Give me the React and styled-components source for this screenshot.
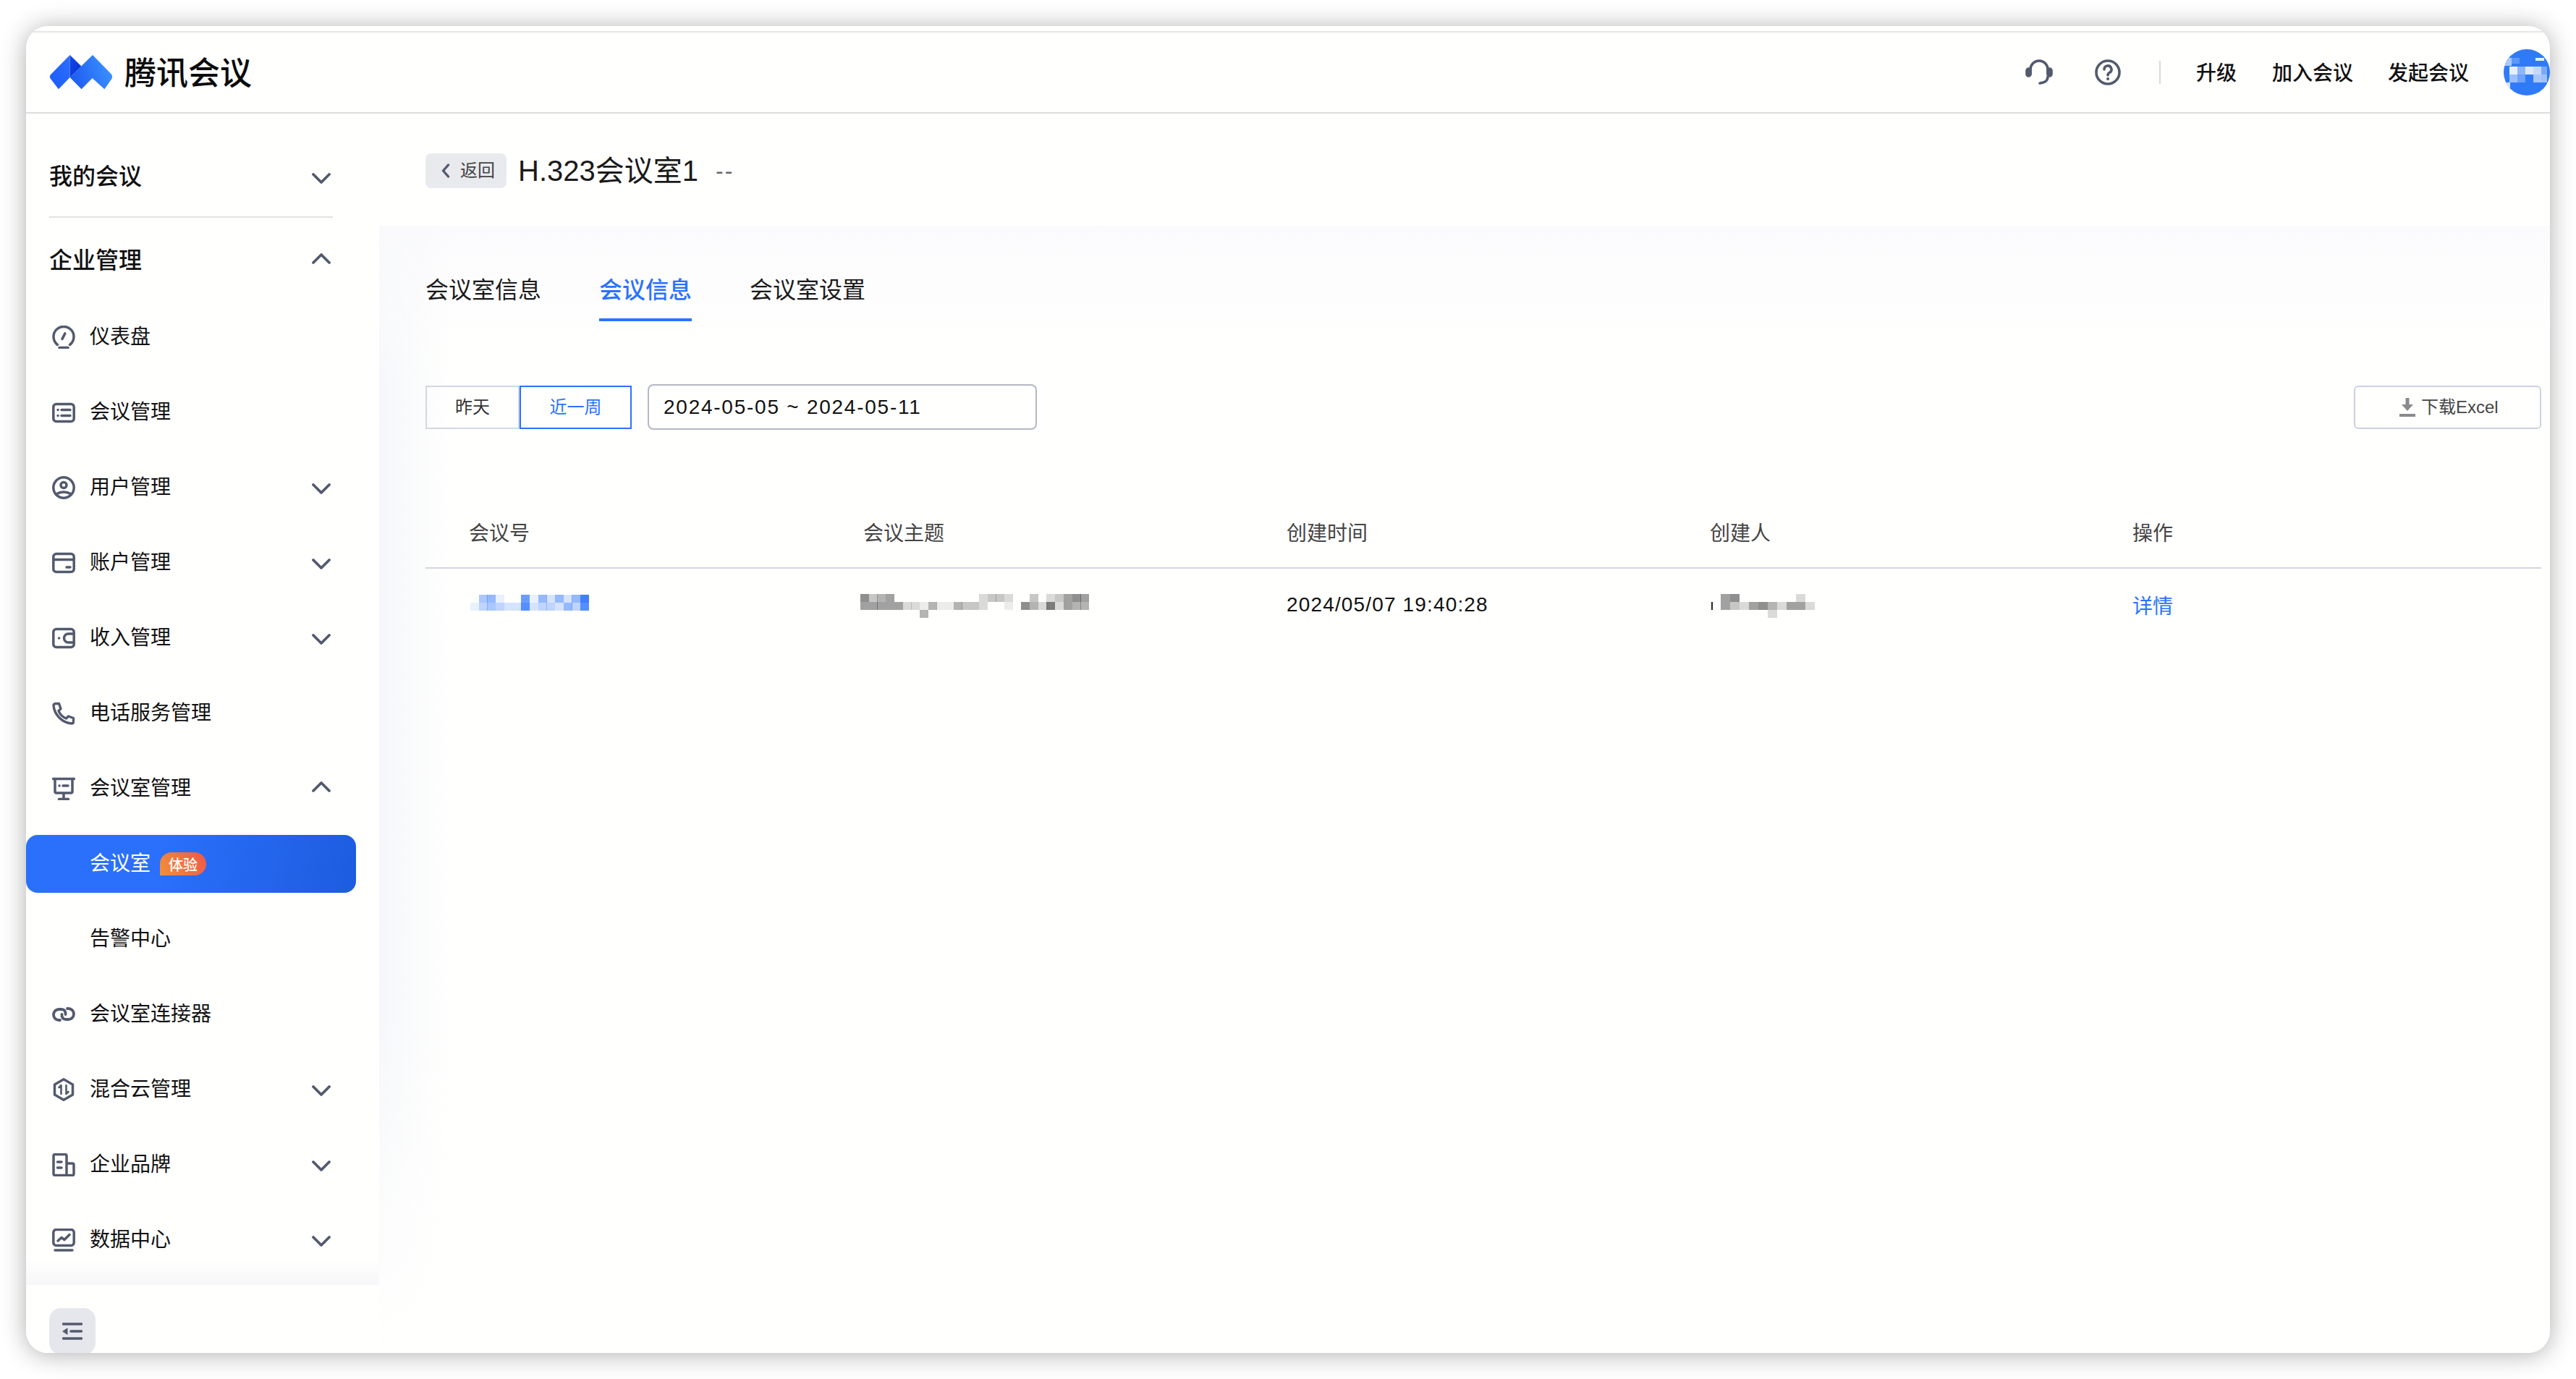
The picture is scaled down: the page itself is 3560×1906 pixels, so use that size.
import React from 'react';
import styled, { createGlobalStyle } from 'styled-components';

const FONT = '"Liberation Sans", "Noto Sans CJK SC", sans-serif';
const ICON = '#535a6d';
const BLUE = '#2b72ff';

const Global = createGlobalStyle`
  html, body { margin: 0; padding: 0; background: #fff; }
  body { font-family: ${FONT}; color: #111; }
  * { box-sizing: border-box; }
`;

const Page = styled.div`
  width: 3560px;
  height: 1906px;
  padding: 36px;
  overflow: hidden;
  background: #fff;
`;
const Win = styled.div`
  width: 3488px;
  height: 1834px;
  border-radius: 30px;
  overflow: hidden;
  background: #fffffe;
  box-shadow: 0 2px 34px rgba(0,0,0,.32);
  display: flex;
  flex-direction: column;
`;
const TopBar = styled.header`
  height: 114px;
  padding: 0 0 0 32px;
  margin-top: 7px;
  border-top: 2px solid #e5e5e5;
  border-bottom: 2px solid #dedede;
  flex: none;
  display: flex;
  align-items: center;
`;
const LogoText = styled.span`
  font-size: 44px;
  font-weight: 500;
  margin: 4px 0 0 16px;
  line-height: 60px;
  color: #0c0c0c;
`;
const TopRight = styled.div`
  margin-left: auto;
  display: flex;
  align-items: center;
`;
const TopIconBtn = styled.span`
  display: flex;
  margin-right: ${p => p.$gap}px;
`;
const VLine = styled.span`
  width: 2px;
  height: 32px;
  background: #d9d9d9;
  margin-right: 49px;
`;
const TopLink = styled.a`
  font-size: 28px;
  font-weight: 500;
  line-height: 40px;
  margin-top: 3px;
  color: #111;
  margin-right: ${p => p.$gap}px;
`;
const Avatar = styled.div`
  width: 64px;
  height: 64px;
  border-radius: 50%;
  overflow: hidden;
  display: flex;
`;
const Body = styled.div`
  flex: 1;
  min-height: 0;
  display: flex;
`;
const Side = styled.aside`
  width: 488px;
  flex: none;
  display: flex;
  flex-direction: column;
  background: #fffffe;
`;
const Nav = styled.nav`
  flex: 1;
  min-height: 0;
  padding-top: 44px;
  position: relative;
  overflow: hidden;
  &::after {
    content: '';
    position: absolute;
    left: 0;
    right: 0;
    bottom: 0;
    height: 36px;
    background: linear-gradient(to bottom, rgba(247,247,249,0), #f7f7f9);
  }
`;
const GroupRow = styled.div`
  width: 456px;
  height: 80px;
  padding: 0 35px 0 32px;
  display: flex;
  align-items: center;
  justify-content: space-between;
  font-size: 32px;
  font-weight: 500;
  color: #111;
`;
const SideDivider = styled.div`
  width: 392px;
  height: 2px;
  margin: 18px 0 16px 32px;
  background: #e2e2e2;
`;
const MenuList = styled.ul`
  list-style: none;
  margin: 29px 0 0;
  padding: 0;
  display: flex;
  flex-direction: column;
  gap: 24px;
`;
const Item = styled.li`
  width: 456px;
  height: 80px;
  padding: 0 35px 0 36px;
  display: flex;
  align-items: center;
  border-radius: 16px;
  font-size: 28px;
  color: ${p => (p.$active ? '#fff' : '#111')};
  background: ${p => (p.$active ? 'linear-gradient(100deg, #2a70fb 40%, #1d5cdf 100%)' : 'transparent')};
`;
const IconSlot = styled.span`
  width: 32px;
  height: 32px;
  margin-right: 20px;
  display: flex;
  flex: none;
`;
const Label = styled.span`
  line-height: 40px;
`;
const Chevron = styled.svg`
  margin-left: auto;
  margin-top: ${p => p.$nudge || 0}px;
  flex: none;
`;
const Badge = styled.span`
  width: 64px;
  height: 32px;
  margin-left: 13px;
  border-radius: 16px 16px 16px 0;
  background: linear-gradient(60deg, #f0913a, #ee5748);
  color: #fff;
  font-size: 20px;
  font-weight: 500;
  display: flex;
  align-items: center;
  justify-content: center;
`;
const SideFoot = styled.div`
  height: 94px;
  flex: none;
  padding: 32px 0 0 32px;
`;
const CollapseBtn = styled.button`
  width: 64px;
  height: 64px;
  border: 0;
  padding: 0;
  border-radius: 16px;
  background: #e5e7ed;
  display: flex;
  align-items: center;
  justify-content: center;
`;
const Main = styled.main`
  flex: 1;
  min-width: 0;
  display: flex;
  flex-direction: column;
`;
const TitleRow = styled.div`
  height: 155px;
  flex: none;
  padding: 55px 0 0 64px;
  display: flex;
  align-items: flex-start;
`;
const BackBtn = styled.button`
  width: 112px;
  height: 48px;
  border: 0;
  border-radius: 8px;
  background: #e9eaee;
  padding: 0 0 0 22px;
  display: flex;
  align-items: center;
  gap: 14px;
  font: 24px/32px ${FONT};
  color: #444;
`;
const Title = styled.h1`
  margin: 0 0 0 16px;
  font-size: 40px;
  font-weight: 400;
  line-height: 48px;
  color: #1a1a1a;
`;
const Dash = styled.span`
  margin-left: 24px;
  font-size: 32px;
  line-height: 48px;
  color: #666;
  letter-spacing: 2px;
`;
const Panel = styled.section`
  flex: 1;
  min-height: 0;
  padding: 65px 12px 0 64px;
  position: relative;
  isolation: isolate;
  background: linear-gradient(to bottom, rgba(251,251,253,1), rgba(251,251,253,0) 170px);
  &::before {
    content: '';
    position: absolute;
    inset: 0 auto 0 0;
    width: 100px;
    z-index: -1;
    background: linear-gradient(to right, #f6f7fa, rgba(246,247,250,0));
    -webkit-mask-image: linear-gradient(to bottom, rgba(0,0,0,.35) 0, #000 220px, #000 70%, transparent 100%);
    mask-image: linear-gradient(to bottom, rgba(0,0,0,.35) 0, #000 220px, #000 70%, transparent 100%);
  }
`;
const Tabs = styled.div`
  display: flex;
  gap: 80px;
`;
const Tab = styled.div`
  height: 67px;
  padding-top: 2px;
  font-size: 32px;
  line-height: 44px;
  color: ${p => (p.$active ? BLUE : '#1a1a1a')};
  border-bottom: 4px solid ${p => (p.$active ? BLUE : 'transparent')};
  font-weight: ${p => (p.$active ? 500 : 400)};
`;
const Filters = styled.div`
  margin-top: 87px;
  height: 63px;
  display: flex;
  align-items: center;
`;
const Seg = styled.button`
  height: 60px;
  width: ${p => p.$w}px;
  padding: 0;
  background: transparent;
  border: 2px solid ${p => (p.$active ? BLUE : '#d3d7e2')};
  color: ${p => (p.$active ? BLUE : '#333')};
  font: 24px/32px ${FONT};
`;
const DateBox = styled.div`
  width: 538px;
  height: 63px;
  margin-left: 22px;
  padding-left: 20px;
  border: 2px solid #b4b8c4;
  border-radius: 8px;
  background: #fffffe;
  display: flex;
  align-items: center;
  font-size: 28px;
  letter-spacing: 1.75px;
  color: #111;
`;
const ExcelBtn = styled.button`
  width: 259px;
  height: 60px;
  margin-left: auto;
  border: 2px solid #ccd1e0;
  border-radius: 6px;
  background: #fffffe;
  padding: 0 0 0 61px;
  display: flex;
  align-items: center;
  gap: 8px;
  font: 24px/32px ${FONT};
  color: #444;
`;
const Table = styled.div`
  margin-top: 92px;
`;
const TRow = styled.div`
  display: grid;
  grid-template-columns: 545px 585px 585px 584px 1fr;
  padding-left: 60px;
  align-items: center;
  height: ${p => p.$h}px;
  border-bottom: ${p => (p.$head ? '2px solid #d2d6e4' : '0')};
  font-size: 28px;
  color: ${p => (p.$head ? '#444' : '#111')};
`;
const Time = styled.span`
  letter-spacing: 1.15px;
`;
const DetailLink = styled.a`
  color: ${BLUE};
`;
const Redacted = styled.svg`
  display: block;
  margin-left: ${p => p.$x || 0}px;
  margin-top: ${p => p.$y || 0}px;
`;

const Svg = ({ w = 32, h = 32, sw = 3.5, vb, children }) => (
  <svg width={w} height={h} viewBox={vb || `0 0 ${w} ${h}`} fill="none" stroke={ICON} strokeWidth={sw} strokeLinecap="round" strokeLinejoin="round">{children}</svg>
);

const icons = {
  gauge: <Svg><path d="M7.5 26.5A14 14 0 1 1 24.5 26.5" /><path d="M14 18.5 17.8 11" strokeWidth="3.6" /><path d="M10 30.5H22" /></Svg>,
  list: <Svg><rect x="1.8" y="4.5" width="28.4" height="24" rx="4" /><path d="M8 12.5h.1M8 20.5h.1M13 12.5H25M13 20.5H25" /></Svg>,
  user: <Svg><circle cx="16" cy="16" r="14.2" /><circle cx="16" cy="12.5" r="4" /><path d="M5.5 25Q16 19 26.5 25" /></Svg>,
  card: <Svg><rect x="1.8" y="3.5" width="28.4" height="25" rx="4" /><path d="M2 11.5H30M20 22H25" /></Svg>,
  wallet: <Svg><rect x="1.8" y="3.5" width="28.4" height="25" rx="4" /><path d="M30 10H22.5a6 6 0 0 0 0 12H30M9.5 16h.1" /></Svg>,
  phone: <Svg sw={3.4}><path d="M5 2.5H9.5L12 9.5 9 12.5C10.5 17 15 21.5 19.5 23L22.5 20 29.5 22.5V27.5C29.5 29 28.5 30 27 30 14 29 3 18 2 5 2 3.5 3.5 2.5 5 2.5Z" /></Svg>,
  room: <Svg><path d="M1.5 2.5H30.5M4 2.5V20a2 2 0 0 0 2 2H26a2 2 0 0 0 2-2V2.5M10 12h.1M15 12H22M16 22V30M9.5 30.5H22.5" /></Svg>,
  link: <Svg sw={3.8}><path d="M11 24H9.5a7.5 7.5 0 0 1 0-15H13c4 0 6 3 5.5 7" /><path d="M21 8H22.5a7.5 7.5 0 0 1 0 15H19c-4 0-6-3-5.5-7" /></Svg>,
  hex: <Svg><path d="M16 1.8 28.5 9V23L16 30.2 3.5 23V9Z" /><path d="M12.5 22V10L9.5 13M19.5 10V22L22.5 19" strokeWidth="2.6" /></Svg>,
  building: <Svg><path d="M20 30.5H4a2 2 0 0 1-2-2V3.5a2 2 0 0 1 2-2H18a2 2 0 0 1 2 2V30.5ZM20 14H28a2 2 0 0 1 2 2V28.5a2 2 0 0 1-2 2H20M7.5 12H13M7.5 20H13" /></Svg>,
  chart: <Svg><rect x="1.8" y="1.5" width="28.4" height="22" rx="4" /><path d="M8 17 13 12.5 17 15.5 24 8.5M4 30H28" /></Svg>,
};

const Down = ({ nudge }) => (
  <Chevron $nudge={nudge} width="26" height="30" viewBox="0 0 26 30" fill="none" stroke={ICON} strokeWidth="3.8" strokeLinecap="round" strokeLinejoin="round"><path d="M2 11 13 22 24 11" /></Chevron>
);
const Up = ({ nudge }) => (
  <Chevron $nudge={nudge} width="26" height="30" viewBox="0 0 26 30" fill="none" stroke={ICON} strokeWidth="3.8" strokeLinecap="round" strokeLinejoin="round"><path d="M2 17 13 6 24 17" /></Chevron>
);

const Mosaic = ({ rows, color, cw = 11.7, ch = 11, edge, ml, mt }) => {
  const w = Math.max(...rows.map(r => r.length)) * cw;
  return (
    <Redacted width={w} height={rows.length * ch} $x={ml} $y={mt} shapeRendering="crispEdges">
      {rows.flatMap((r, j) => r.split('').map((c, i) => (
        c === '0' ? null : <rect key={`${j}-${i}`} x={i * cw} y={j * ch} width={cw + 0.3} height={ch + 0.3} fill={color} fillOpacity={Number(c) / 10} />
      )))}
      {edge && <rect x="0" y={ch} width="2" height={ch} fill="#222" />}
    </Redacted>
  );
};

const menu = [
  { icon: 'gauge', t: '仪表盘' },
  { icon: 'list', t: '会议管理' },
  { icon: 'user', t: '用户管理', c: 'down' },
  { icon: 'card', t: '账户管理', c: 'down' },
  { icon: 'wallet', t: '收入管理', c: 'down' },
  { icon: 'phone', t: '电话服务管理' },
  { icon: 'room', t: '会议室管理', c: 'up' },
  { t: '会议室', active: true, badge: '体验' },
  { t: '告警中心' },
  { icon: 'link', t: '会议室连接器' },
  { icon: 'hex', t: '混合云管理', c: 'down' },
  { icon: 'building', t: '企业品牌', c: 'down' },
  { icon: 'chart', t: '数据中心', c: 'down' },
];

const Logo = () => (
  <svg width="88" height="48" viewBox="0 0 88 48">
    <defs>
      <linearGradient id="lgA" x1="0" y1="1" x2="1" y2="0.3"><stop offset="0" stopColor="#1a5cf6" /><stop offset="1" stopColor="#2a6cff" /></linearGradient>
      <linearGradient id="lgB" x1="0" y1="0.9" x2="1" y2="0.6"><stop offset="0" stopColor="#1c56f0" /><stop offset="1" stopColor="#3a90ff" /></linearGradient>
      <linearGradient id="lgC" x1="0" y1="0" x2="1" y2="1"><stop offset="0" stopColor="#1448ea" /><stop offset="1" stopColor="#0632cf" /></linearGradient>
    </defs>
    <path d="M28.6 0 1.6 27.4Q0 30 1.6 32.6L12.9 47.3 28.6 31Z" fill="url(#lgA)" />
    <path d="M28.6 31 44.6 47.3 59.6 32 76.4 47.3 86.4 33Q88 30 86.4 27L60 0 28.6 31Z" fill="url(#lgB)" />
    <path d="M28.6 0 44.4 15.5 28.6 31Z" fill="url(#lgC)" />
  </svg>
);

export default function App() {
  return (
    <Page>
      <Global />
      <Win>
        <TopBar>
          <Logo />
          <LogoText>腾讯会议</LogoText>
          <TopRight>
            <TopIconBtn $gap={58}>
              <svg width="38" height="36" viewBox="0 0 38 36" fill="none" stroke={ICON} strokeWidth="3.6" strokeLinecap="round">
                <path d="M7 20V14a12 12 0 0 1 24 0V20" />
                <path d="M31 24C31 30 27 32 20 33" />
                <rect x="2" y="13" width="5" height="10" rx="2.5" fill={ICON} />
                <rect x="31" y="13" width="5" height="10" rx="2.5" fill={ICON} />
              </svg>
            </TopIconBtn>
            <TopIconBtn $gap={53}>
              <svg width="36" height="36" viewBox="0 0 36 36" fill="none" stroke={ICON} strokeWidth="3.6" strokeLinecap="round">
                <circle cx="18" cy="18" r="16" />
                <path d="M13 14a5 5 0 1 1 7.5 4.3c-1.7 1-2.5 1.8-2.5 3.7" />
                <path d="M18 27h.1" strokeWidth="4" />
              </svg>
            </TopIconBtn>
            <VLine />
            <TopLink $gap={49}>升级</TopLink>
            <TopLink $gap={48}>加入会议</TopLink>
            <TopLink $gap={48}>发起会议</TopLink>
            <Avatar>
              <svg width="64" height="64" viewBox="0 0 64 64" shapeRendering="crispEdges">
                <rect width="64" height="64" fill="#2f7bf7" />
                <rect x="0" y="12" width="11" height="11" fill="#a9c8fb" />
                <rect x="11" y="12" width="11" height="8" fill="#5d98f8" />
                <rect x="44" y="12" width="12" height="4" fill="#e3eefe" />
                <rect x="8" y="24" width="11" height="11" fill="#e6effd" />
                <rect x="19" y="24" width="11" height="11" fill="#8eb6fa" />
                <rect x="30" y="24" width="11" height="11" fill="#dbe8fd" />
                <rect x="41" y="24" width="11" height="11" fill="#c3d9fc" />
                <rect x="52" y="24" width="8" height="11" fill="#7aa9f9" />
                <rect x="8" y="35" width="11" height="11" fill="#9dc0fa" />
                <rect x="19" y="35" width="11" height="11" fill="#6fa2f9" />
                <rect x="41" y="35" width="11" height="11" fill="#a8c7fb" />
                <rect x="52" y="35" width="8" height="11" fill="#a0c2fb" />
                <rect x="0" y="46" width="9" height="12" fill="#d8e6fd" />
              </svg>
            </Avatar>
          </TopRight>
        </TopBar>
        <Body>
          <Side>
            <Nav>
              <GroupRow><span>我的会议</span><Down nudge={7} /></GroupRow>
              <SideDivider />
              <GroupRow><span>企业管理</span><Up nudge={8} /></GroupRow>
              <MenuList>
                {menu.map(m => (
                  <Item key={m.t} $active={m.active}>
                    <IconSlot>{m.icon ? icons[m.icon] : null}</IconSlot>
                    <Label>{m.t}</Label>
                    {m.badge && <Badge>{m.badge}</Badge>}
                    {m.c === 'down' && <Down />}
                    {m.c === 'up' && <Up nudge={2} />}
                  </Item>
                ))}
              </MenuList>
            </Nav>
            <SideFoot>
              <CollapseBtn aria-label="收起">
                <svg width="28" height="24" viewBox="0 0 28 24" fill="none" stroke={ICON} strokeWidth="3.4" strokeLinecap="round">
                  <path d="M1.5 2H26.5M12 12H26.5M1.5 22H26.5" />
                  <path d="M1 12 7 8V16Z" fill={ICON} strokeWidth="1" strokeLinejoin="round" />
                </svg>
              </CollapseBtn>
            </SideFoot>
          </Side>
          <Main>
            <TitleRow>
              <BackBtn>
                <svg width="12" height="20" viewBox="0 0 12 20" fill="none" stroke={ICON} strokeWidth="3.4" strokeLinecap="round" strokeLinejoin="round"><path d="M9.5 2 2.5 10 9.5 18" /></svg>
                返回
              </BackBtn>
              <Title>H.323会议室1</Title>
              <Dash>--</Dash>
            </TitleRow>
            <Panel>
              <Tabs>
                <Tab>会议室信息</Tab>
                <Tab $active>会议信息</Tab>
                <Tab>会议室设置</Tab>
              </Tabs>
              <Filters>
                <Seg $w={130}>昨天</Seg>
                <Seg $w={155} $active>近一周</Seg>
                <DateBox>2024-05-05 ~ 2024-05-11</DateBox>
                <ExcelBtn>
                  <svg width="22" height="26" viewBox="0 0 22 26" fill="#8a8a8d"><path d="M8.5 0H13.5V9H19L11 18 3 9H8.5Z" /><rect y="22" width="22" height="4" /></svg>
                  下载Excel
                </ExcelBtn>
              </Filters>
              <Table>
                <TRow $head $h={100}>
                  <span>会议号</span><span>会议主题</span><span>创建时间</span><span>创建人</span><span>操作</span>
                </TRow>
                <TRow $h={100}>
                  <Mosaic color={BLUE} ml={2} mt={-6} rows={['04510071525259', '13432282332538']} />
                  <Mosaic color="#444" ml={-4} mt={3} rows={['634500000000002332003023565', '555552214114332001064272544', '000000040000000000000000000']} />
                  <Time>2024/05/07 19:40:28</Time>
                  <Mosaic color="#444" ml={2} mt={2} edge cw={13} rows={['05600000020', '05325642552', '00000020000']} />
                  <DetailLink>详情</DetailLink>
                </TRow>
              </Table>
            </Panel>
          </Main>
        </Body>
      </Win>
    </Page>
  );
}
